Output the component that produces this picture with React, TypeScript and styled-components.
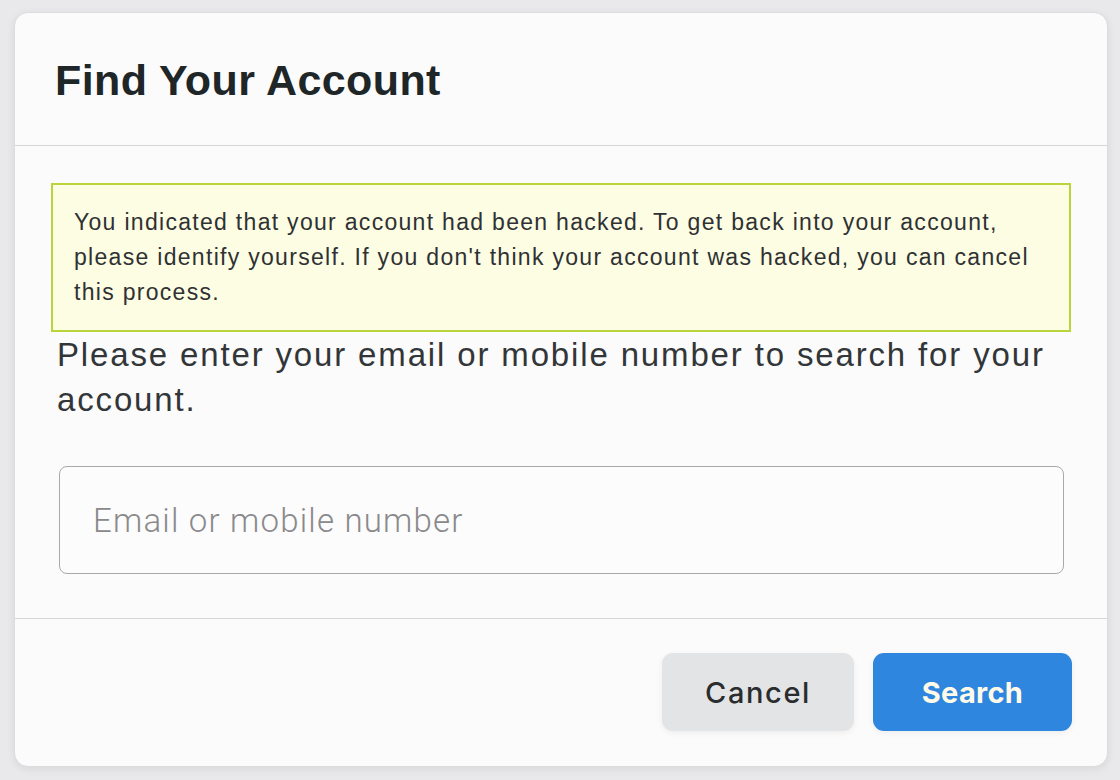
import { useState } from "react";
import styled, { createGlobalStyle } from "styled-components";

const GlobalStyle = createGlobalStyle`
  html, body {
    margin: 0;
    padding: 0;
    background: #e9e9eb;
    font-family: "Liberation Sans", Arial, sans-serif;
  }
  * {
    box-sizing: border-box;
  }
`;

const Page = styled.div`
  width: 1120px;
  height: 780px;
  padding: 12px 12px 13px 14px;
`;

const Card = styled.div`
  width: 1094px;
  height: 755px;
  background: #fbfbfb;
  border: 1px solid #dcdcde;
  border-radius: 14px;
  box-shadow: 0 2px 8px rgba(0, 0, 0, 0.08);
  display: flex;
  flex-direction: column;
  overflow: hidden;
`;

const Header = styled.div`
  height: 133px;
  padding: 42px 40px 0;
  border-bottom: 1px solid #d6d6d8;
`;

const Title = styled.h1`
  margin: 0;
  font-size: 43px;
  line-height: 50px;
  font-weight: 700;
  color: #1f2628;
  letter-spacing: 0.4px;
`;

const Body = styled.div`
  flex: 1;
  padding: 37px 36px 0;
  border-bottom: 1px solid #d6d6d8;
`;

const Notice = styled.div`
  height: 149px;
  background: #fdfde3;
  border: 2px solid #bad43c;
  padding: 20px 21px 0;
  font-size: 23px;
  line-height: 35px;
  letter-spacing: 1.3px;
  color: #2f3133;
`;

const Prompt = styled.p`
  margin: 0;
  padding-left: 6px;
  font-size: 33px;
  line-height: 45px;
  letter-spacing: 1.85px;
  color: #333638;
`;

const Field = styled.input`
  display: block;
  width: 1005px;
  height: 108px;
  margin: 44px 0 0 8px;
  border: 1px solid #a9a9ab;
  border-radius: 8px;
  background: #fcfcfc;
  padding: 0 33px;
  font-family: "Roboto", "Liberation Sans", sans-serif;
  font-weight: 300;
  font-size: 33px;
  letter-spacing: 1.2px;
  color: #333;
  caret-color: #333;
  outline: none;
  &::placeholder {
    color: #8a8a8c;
  }
`;

const Footer = styled.div`
  height: 147px;
  padding: 34px 35px 0;
  display: flex;
  justify-content: flex-end;
  align-items: flex-start;
  gap: 19px;
`;

const Button = styled.button<{ $primary?: boolean }>`
  height: 78px;
  width: ${(p) => (p.$primary ? "199px" : "192px")};
  border: none;
  border-radius: 11px;
  font-family: "Inter", "Liberation Sans", sans-serif;
  font-size: 29px;
  font-weight: ${(p) => (p.$primary ? 700 : 500)};
  letter-spacing: ${(p) => (p.$primary ? "0.3px" : "1.6px")};
  color: ${(p) => (p.$primary ? "#fffbe8" : "#2a2c2e")};
  background: ${(p) => (p.$primary ? "#2f86df" : "#e3e4e6")};
  box-shadow: 0 2px 6px rgba(0, 0, 0, 0.06);
  cursor: pointer;
`;

const App = () => {
  const [value, setValue] = useState("");
  return (
    <Page>
      <GlobalStyle />
      <Card>
        <Header>
          <Title>Find Your Account</Title>
        </Header>
        <Body>
          <Notice>
            You indicated that your account had been hacked. To get back into
            your account, please identify yourself. If you don't think your
            account was hacked, you can cancel this process.
          </Notice>
          <Prompt>
            Please enter your email or mobile number to search for your
            account.
          </Prompt>
          <Field
            autoFocus
            value={value}
            onChange={(e) => setValue(e.target.value)}
            placeholder="Email or mobile number"
          />
        </Body>
        <Footer>
          <Button>Cancel</Button>
          <Button $primary>Search</Button>
        </Footer>
      </Card>
    </Page>
  );
};

export default App;
